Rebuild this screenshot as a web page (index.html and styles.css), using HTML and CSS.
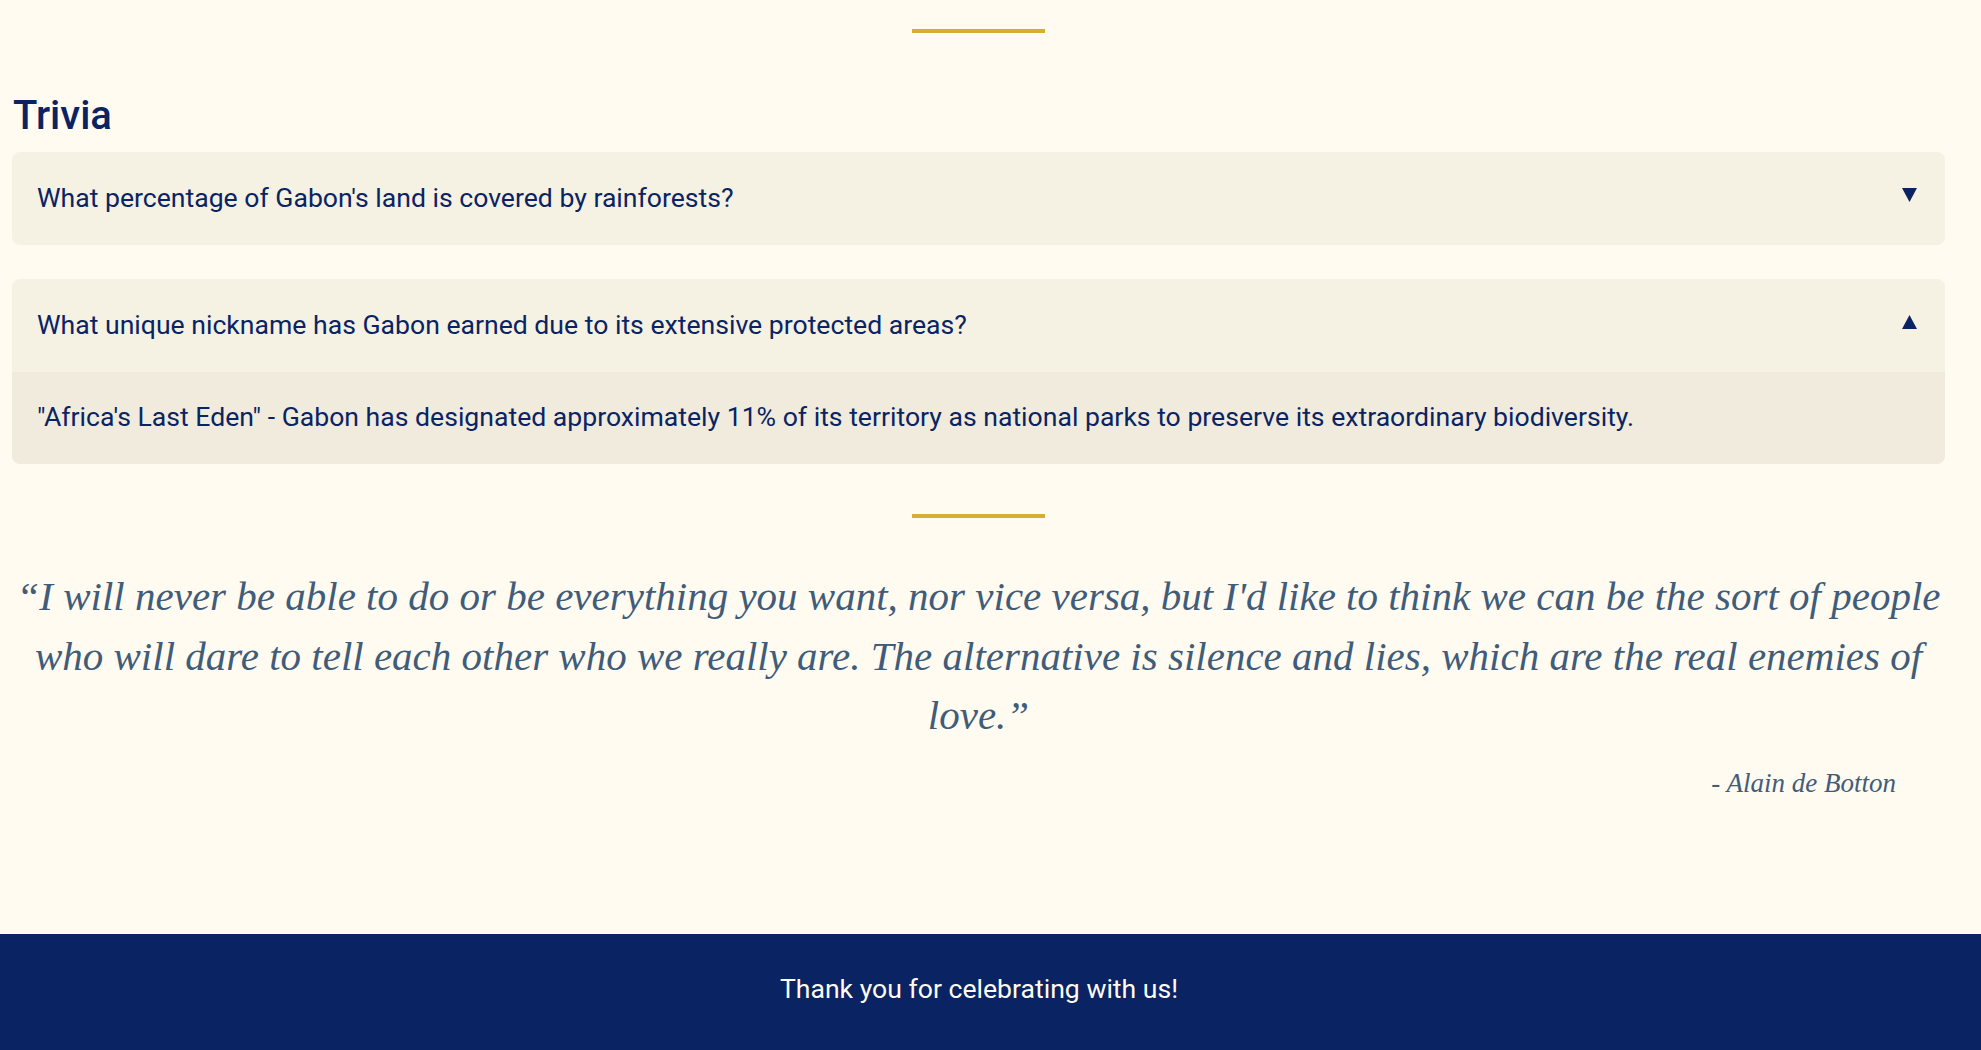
FILE: index.html
```html
<!DOCTYPE html>
<html lang="en">
<head>
<meta charset="utf-8">
<title>Trivia</title>
<link rel="stylesheet" href="styles.css">
</head>
<body>
<main class="page">
  <div class="divider divider-top"></div>
  <section class="trivia">
    <h2 class="trivia-title">Trivia</h2>
    <div class="faq">
      <div class="faq-q">
        <span>What percentage of Gabon's land is covered by rainforests?</span>
        <svg class="arrow" width="15" height="14" viewBox="0 0 15 14"><polygon points="0,0 15,0 7.5,14" fill="#0a2463"/></svg>
      </div>
    </div>
    <div class="faq open">
      <div class="faq-q">
        <span>What unique nickname has Gabon earned due to its extensive protected areas?</span>
        <svg class="arrow" width="15" height="14" viewBox="0 0 15 14"><polygon points="7.5,0 15,14 0,14" fill="#0a2463"/></svg>
      </div>
      <div class="faq-a">"Africa's Last Eden" - Gabon has designated approximately 11% of its territory as national parks to preserve its extraordinary biodiversity.</div>
    </div>
  </section>
  <div class="divider divider-mid"></div>
  <blockquote class="quote">
    <p class="quote-text">“I will never be able to do or be everything you want, nor vice versa, but I'd like to think we can be the sort of people who will dare to tell each other who we really are. The alternative is silence and lies, which are the real enemies of love.”</p>
    <p class="quote-author">- Alain de Botton</p>
  </blockquote>
</main>
<footer class="footer">Thank you for celebrating with us!</footer>
</body>
</html>
```
FILE: styles.css
```css
html, body {
  margin: 0;
  padding: 0;
  background: #fffbf0;
}
body {
  font-family: Roboto, "Liberation Sans", sans-serif;
  color: #0a2463;
}
.page {
  padding: 29px 36px 0 12px;
}
.divider {
  width: 133px;
  height: 4px;
  background: #d4af37;
  margin: 0 auto;
}
.trivia-title {
  margin: 60px 0 13px 1px;
  font-size: 40px;
  font-weight: 500;
  line-height: 46px;
  color: #0a2463;
}
.faq {
  background: #f5f2e4;
  border-radius: 8px;
  margin-bottom: 34px;
  overflow: hidden;
}
.faq.open {
  margin-bottom: 0;
}
.faq-q {
  display: flex;
  justify-content: space-between;
  align-items: center;
  padding: 30px 28px 32px 25px;
  font-size: 26.6px;
  line-height: 31px;
}
.arrow {
  display: block;
  margin-top: -6px;
}
.faq-a {
  background: #f0ebdc;
  padding: 29px 25px 32px 25px;
  font-size: 26.6px;
  line-height: 31px;
}
.divider-mid {
  margin-top: 50px;
}
.quote {
  margin: 49px 0 0 0;
  padding: 0;
}
.quote-text {
  margin: 0;
  font-family: "Liberation Serif", "Times New Roman", serif;
  font-style: italic;
  font-size: 41px;
  line-height: 59.5px;
  text-align: center;
  color: #3f5d7a;
}
.quote-author {
  margin: 22px 49px 0 0;
  font-family: "Liberation Serif", "Times New Roman", serif;
  font-style: italic;
  font-size: 27px;
  line-height: 31px;
  text-align: right;
  color: #3f5d7a;
}
.footer {
  margin-top: 135px;
  background: #0a2362;
  color: #fffbf0;
  font-size: 26.6px;
  line-height: 30px;
  padding: 40px 23px 46px 0;
  text-align: center;
}
```
